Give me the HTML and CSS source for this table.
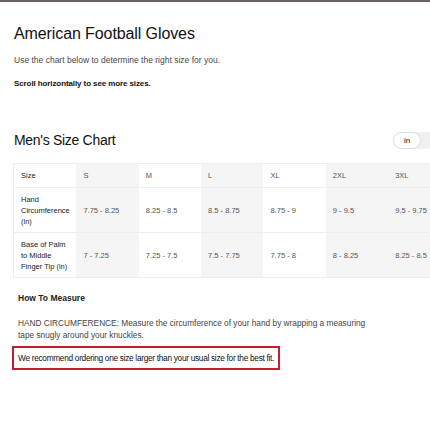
FILE: index.html
```html
<!DOCTYPE html>
<html>
<head>
<meta charset="utf-8">
<meta name="viewport" content="width=device-width">
<link rel="stylesheet" href="styles.css">
</head>
<body>
<div class="topbar"></div>
<div class="page">
  <h1 class="title">American Football Gloves</h1>
  <p class="intro">Use the chart below to determine the right size for you.</p>
  <p class="hint">Scroll horizontally to see more sizes.</p>

  <div class="chart-head">
    <h2 class="chart-title">Men's Size Chart</h2>
    <div class="units">
      <span class="unit on">in</span>
      <span class="unit">cm</span>
    </div>
  </div>

  <div class="scroller">
    <table class="sizes">
      <tr>
        <th>Size</th>
        <td class="alt">S</td><td>M</td><td class="alt">L</td><td>XL</td><td class="alt">2XL</td><td class="alt">3XL</td><td>4XL</td>
      </tr>
      <tr>
        <th>Hand Circumference (in)</th>
        <td class="alt">7.75 - 8.25</td><td>8.25 - 8.5</td><td class="alt">8.5 - 8.75</td><td>8.75 - 9</td><td class="alt">9 - 9.5</td><td class="alt">9.5 - 9.75</td><td>9.75 - 10</td>
      </tr>
      <tr>
        <th>Base of Palm to Middle Finger Tip (in)</th>
        <td class="alt">7 - 7.25</td><td>7.25 - 7.5</td><td class="alt">7.5 - 7.75</td><td>7.75 - 8</td><td class="alt">8 - 8.25</td><td class="alt">8.25 - 8.5</td><td>8.5 - 8.75</td>
      </tr>
    </table>
  </div>

  <div class="measure">
    <h3 class="measure-title">How To Measure</h3>
    <p class="measure-text">HAND CIRCUMFERENCE: Measure the circumference of your hand by wrapping a measuring tape snugly around your knuckles.</p>
    <p class="note">We recommend ordering one size larger than your usual size for the best fit.</p>
  </div>
</div>
</body>
</html>
```

FILE: styles.css
```css
body {
    margin: 0;
    background: #fff;
    font-family: "Liberation Sans", Arial, sans-serif;
    color: #111;
}
.topbar {
    height: 2px;
    background: #6b6367;
}
.page {
    padding-left: 14px;
}
.title {
    margin: 21px 0 0;
    font-size: 16px;
    font-weight: normal;
    letter-spacing: -0.1px;
    line-height: 22px;
}
.intro {
    margin: 9px 0 0;
    font-size: 8.5px;
    line-height: 12px;
    color: #4a4a4a;
}
.hint {
    margin: 12px 0 0;
    font-size: 8px;
    letter-spacing: -0.1px;
    line-height: 12px;
    font-weight: bold;
    color: #111;
}
.chart-head {
    display: flex;
    align-items: center;
    justify-content: space-between;
    margin-top: 40px;
    height: 20px;
}
.chart-title {
    margin: 0;
    font-size: 14px;
    font-weight: normal;
    letter-spacing: -0.3px;
}
.units {
    display: flex;
    background: #f0f0f0;
    border-radius: 9px;
    margin-right: -17px;
}
.unit {
    width: 26px;
    height: 17px;
    line-height: 17px;
    text-align: center;
    font-size: 8px;
    color: #111;
    border-radius: 9px;
}
.unit.on {
    background: #fff;
    border: 1px solid #ddd;
    height: 15px;
    line-height: 15px;
}
.unit + .unit {
    text-indent: 14px;
}
.scroller {
    margin-top: 13px;
    margin-left: -1px;
    overflow: hidden;
}
.sizes {
    border-collapse: collapse;
    table-layout: fixed;
    width: 500px;
    font-size: 7.5px;
}
.sizes th, .sizes td {
    width: 48px;
    padding: 0 7px;
    text-align: left;
    border-top: 1px solid #eee;
    border-bottom: 1px solid #eee;
    color: #555;
    font-weight: normal;
}
.sizes th {
    color: #222;
    line-height: 11px;
    border-left: 1px solid #eee;
}
.sizes tr:first-child th, .sizes tr:first-child td {
    height: 23px;
}
.sizes tr + tr th, .sizes tr + tr td {
    height: 44px;
}
.sizes .alt {
    background: #f5f5f5;
}
.measure {
    padding-left: 4px;
}
.measure-title {
    margin: 14px 0 0;
    font-size: 8.5px;
    line-height: 12px;
    font-weight: bold;
    color: #222;
}
.measure-text {
    margin: 13px 0 0;
    width: 360px;
    font-size: 8.3px;
    line-height: 12px;
    color: #444;
}
.note {
    margin: 5px 0 0 -6px;
    width: 256px;
    padding: 5px 4px;
    border: 2px solid #c21f30;
    font-size: 8.3px;
    line-height: 10px;
    letter-spacing: -0.3px;
    white-space: nowrap;
    color: #111;
}
```
